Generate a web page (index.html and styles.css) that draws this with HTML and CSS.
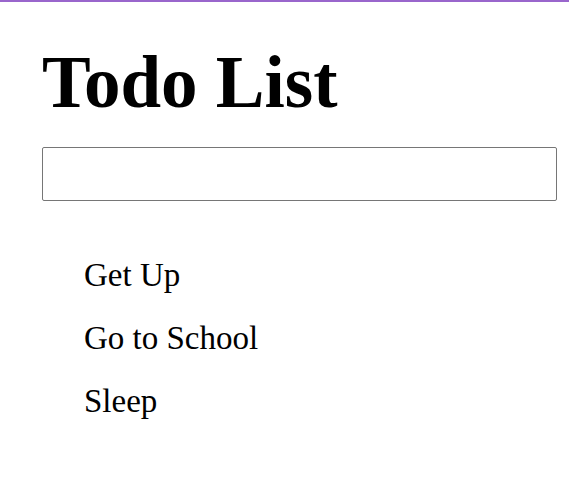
FILE: index.html
```html
<!DOCTYPE html>
<html>
<head>
<meta charset="utf-8">
<link rel="stylesheet" href="styles.css">
</head>
<body>
<div class="app">
  <h1 class="title">Todo List</h1>
  <input class="new-todo" type="text">
  <ul class="todos">
    <li class="todo">Get Up</li>
    <li class="todo">Go to School</li>
    <li class="todo">Sleep</li>
  </ul>
</div>
</body>
</html>
```
FILE: styles.css
```css
html, body {
  margin: 0;
  padding: 0;
  background: #fff;
}
body {
  border-top: 2px solid #9966cc;
  font-family: "Liberation Serif", "Times New Roman", serif;
  color: #000;
}
.app {
  display: flex;
  flex-direction: column;
  padding: 0 12px 0 42px;
}
.title {
  margin: 41px 0 0 0;
  font-size: 73px;
  font-weight: bold;
  line-height: 80px;
}
.new-todo {
  margin-top: 24px;
  height: 54px;
  box-sizing: border-box;
  border: 1px solid #767676;
  border-radius: 2px;
  padding: 0 8px;
  font-size: 24px;
  font-family: inherit;
}
.todos {
  list-style: none;
  margin: 30px 0 0 0;
  padding: 0 0 0 42px;
}
.todo {
  font-size: 33px;
  line-height: 37px;
  margin-top: 26px;
}
```
